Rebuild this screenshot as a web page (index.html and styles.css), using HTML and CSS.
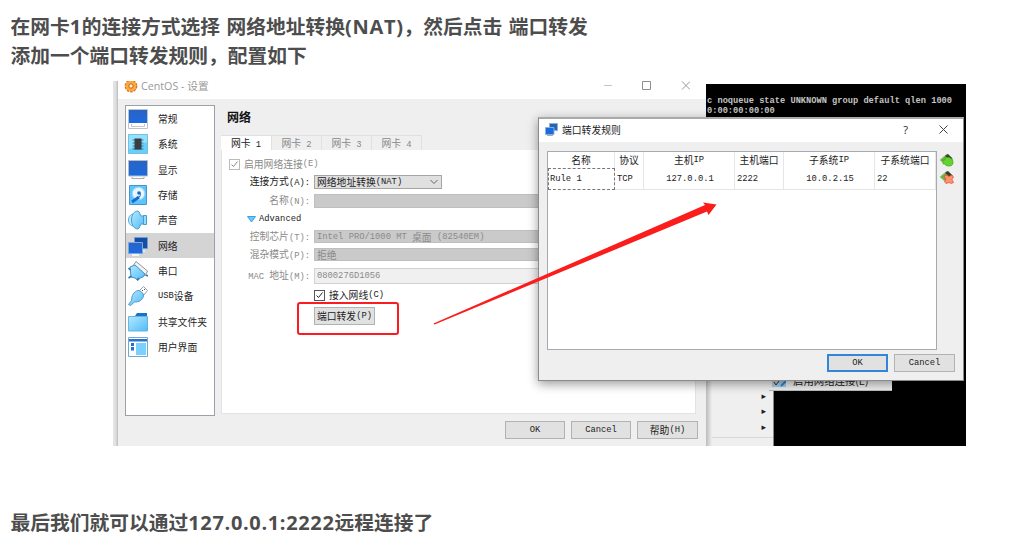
FILE: index.html
```html
<!DOCTYPE html>
<html lang="zh-CN">
<head>
<meta charset="utf-8">
<title>CentOS - 设置</title>
<link rel="stylesheet" href="styles.css">
</head>
<body>
<svg width="0" height="0" class="defs" aria-hidden="true">
  <defs>
    <linearGradient id="blue" x1="0" y1="0" x2="0" y2="1"><stop offset="0" stop-color="#2a63c4"/><stop offset="1" stop-color="#1a6be0"/></linearGradient>
    <linearGradient id="sky" x1="0" y1="0" x2="1" y2="1"><stop offset="0" stop-color="#b5e8ff"/><stop offset="1" stop-color="#4fbcf8"/></linearGradient>
  </defs>
</svg>
<main class="article">
  <p class="lead">在网卡<span>1</span>的连接方式选择 网络地址转换<span>(NAT)</span>，然后点击 端口转发<br>添加一个端口转发规则，配置如下</p>

  <figure class="desktop">
    <div class="console">
      <div>c noqueue state UNKNOWN group default qlen 1000</div>
      <div>0:00:00:00:00</div>
    </div>
    <div class="menu">
      <i>▸</i><i>▸</i><i>▸</i>
    </div>
    <div class="statusbar"><span class="mark"><svg width="14" height="10"><path d="M0 0h14v6H0z" fill="#9fd0f2"/><path d="M1 0h6v4H1z" fill="#c8c8c8"/><path d="M2 1l2 3 3-4" fill="none" stroke="#333"/><path d="M9 5l5-5" stroke="#2a8ad8" stroke-width="2"/></svg></span><span class="cut">启用网络连接(E)</span></div>

    <section class="window settings">
      <header class="titlebar">
        <svg width="14" height="14" viewBox="0 0 14 14"><circle cx="7" cy="7" r="5.6" fill="#f49a2c" stroke="#d9741d" stroke-width="1.6" stroke-dasharray="2.4 1.1"/><circle cx="7" cy="7" r="5.2" fill="#fbab3e"/><circle cx="7" cy="7" r="2.2" fill="#fff1c8" stroke="#cf5b1c"/></svg>
        <span class="name">CentOS - 设置</span>
        <span class="controls">
          <svg width="90" height="12"><path d="M4 5.500h8" stroke="#c4c4c4"/><path d="M42.500 1.500h8v8h-8z" fill="none" stroke="#8e8e8e"/><path d="M82 1.500l8 8M90 1.500l-8 8" stroke="#999"/></svg>
        </span>
      </header>
      <div class="body">
        <nav class="side">
          <div class="item"><svg viewBox="0 0 20 20"><path d="M.5.500h19v19H.5z" fill="#fff" stroke="#bcc3cb"/><path d="M1 1h18v13H1z" fill="url(#blue)"/><path d="M3.500 15v2.500h13V15" fill="none" stroke="#c5c9ce"/></svg>常规</div>
          <div class="item"><svg viewBox="0 0 20 20"><path d="M.5.500h19v19H.5z" fill="#67cffb" stroke="#79bddf"/><path d="M1 1h18v7L1 15z" fill="#92e1ff"/><path d="M4.500 6h11M4.500 9h11M4.500 12h11M4.500 15h11" stroke="#357fa6"/><path d="M6.500 4.500h7v11h-7z" fill="#383d43"/></svg>系统</div>
          <div class="item"><svg viewBox="0 0 20 20"><path d="M.5.500h19v15.500H.5z" fill="url(#blue)" stroke="#b6bdc8"/><path d="M4 17v1.500h12V17" fill="#fff" stroke="#a4a9b0"/></svg>显示</div>
          <div class="item"><svg viewBox="0 0 20 20"><path d="M1.500.500h17v19h-17z" fill="#5cc5ff" stroke="#4896c9"/><circle cx="10.500" cy="8.500" r="6.300" fill="#e7f7ff" stroke="#9bd3f2"/><path d="M4 17l7-5" stroke="#186bcc" stroke-width="3" fill="none"/><path d="M10 13c2-1 3-3 2-5" stroke="#186bcc" fill="none"/><circle cx="11" cy="8" r="1.800" fill="#1666cc"/></svg>存储</div>
          <div class="item"><svg viewBox="0 0 20 20"><path d="M6 4C2 4 .5 7 .5 10S2 16 6 16z" fill="#b9ebff" stroke="#58aede"/><path d="M10 1C6 1 3.500 5 3.500 10S6 19 10 19c2-1 2-4 3-5h3V6h-3c-1-1-1-4-3-5z" fill="url(#sky)" stroke="#4c9bcb"/><path d="M15.500 5.500h3v9h-3z" fill="#8de0ff" stroke="#4c9bcb"/></svg>声音</div>
          <div class="item active"><svg viewBox="0 0 20 20"><path d="M6.500 1.500h13v11h-13z" fill="#174da1" stroke="#6d9ddd"/><path d="M11 15h6" stroke="#fff"/><path d="M.5 6.500h14v11H.5z" fill="url(#blue)" stroke="#79a9e6"/><path d="M4 19h7" stroke="#fff" stroke-width="1.500"/></svg>网络</div>
          <div class="item"><svg viewBox="0 0 20 20"><path d="M5 5l3-4.500L19.500 10 17 15z" fill="#f1f3f4" stroke="#8c969d"/><path d="M2 6l5-2 10 9-2 3-3 1-2 2.500L7 17l-4-1z" fill="url(#sky)" stroke="#3f91c6"/><path d="M.5 7l2 2M.5 17l3-2M9 19l2-2M18 14l2 1" stroke="#2d78b3" stroke-width="1.600"/></svg>串口</div>
          <div class="item"><svg viewBox="0 0 20 20"><path d="M11.500 4.500l4-4 4 4-4 5z" fill="#fff" stroke="#969fa5"/><path d="M14 4l1 1M16 3l1 1" stroke="#555"/><path d="M10 4.500c2-.5 6 3 5.500 5.500-1 4-4 6-9 6l-4 3.500-2-1 3-4c0-5 2.500-9 6.500-10z" fill="url(#sky)" stroke="#519cc7"/></svg><b>USB</b>设备</div>
          <div class="item"><svg viewBox="0 0 20 20"><path d="M7 4l2-3h10v4H7z" fill="#1b70c8"/><path d="M.5 4.500h19v14.500H.5z" fill="url(#sky)" stroke="#64b5df"/></svg>共享文件夹</div>
          <div class="item"><svg viewBox="0 0 20 20"><path d="M.5.500h19v19H.5z" fill="#fff" stroke="#6ea9d2"/><path d="M1 2h18v2.500H1z" fill="#2a70cf"/><path d="M8 6h10v12H8z" fill="#7ad0ff"/><path d="M3 6h3v3H3zm0 4h3v3.500H3z" fill="#236ed5"/></svg>用户界面</div>
        </nav>
        <div class="content">
          <h2>网络</h2>
          <div class="tabs"><span class="on">网卡<b> 1</b></span><span>网卡<b> 2</b></span><span>网卡<b> 3</b></span><span>网卡<b> 4</b></span></div>
          <div class="panel">
            <div class="line dim enable"><i class="check"><svg viewBox="0 0 9 9"><path d="M1.500 4.500l2 2 4-5" fill="none" stroke="currentColor"/></svg></i>启用网络连接<b>(E)</b></div>
            <div class="line mode"><label>连接方式<b>(A):</b></label><span class="select">网络地址转换<b>(NAT)</b><svg width="8" height="6"><path d="M.5 1l3.500 3.500L7.500 1" fill="none" stroke="#666"/></svg></span></div>
            <div class="line dim named"><label>名称<b>(N):</b></label><span class="field"></span></div>
            <div class="line advanced"><svg width="9" height="7"><path d="M.5.500h8l-4 5.500z" fill="#6fc9fb" stroke="#3aa0e8"/></svg><b>Advanced</b></div>
            <div class="line dim chip"><label>控制芯片<b>(T):</b></label><span class="field"><b>Intel PRO/1000 MT </b>桌面<b> (82540EM)</b></span></div>
            <div class="line dim mix"><label>混杂模式<b>(P):</b></label><span class="field">拒绝</span></div>
            <div class="line dim mac"><label><b>MAC </b>地址<b>(M):</b></label><span class="field light"><b>0800276D1056</b></span></div>
            <div class="line cable"><label></label><i class="check"><svg viewBox="0 0 9 9"><path d="M1.500 4.500l2 2 4-5" fill="none" stroke="currentColor"/></svg></i>接入网线<b>(C)</b></div>
            <div class="line forward"><label></label><span class="button small">端口转发<b>(P)</b></span></div>
          </div>
        </div>
      </div>
      <footer class="actions"><span class="button"><b>OK</b></span><span class="button"><b>Cancel</b></span><span class="button">帮助<b>(H)</b></span></footer>
    </section>

    <section class="window dialog">
      <header class="titlebar">
        <svg width="13" height="13" viewBox="0 0 13 13"><path d="M4.500.500h8v7h-8z" fill="#2862b5" stroke="#86b2df"/><path d="M.5 4.500h8.500v7H.5z" fill="#1a6bdd" stroke="#86b2df"/><path d="M2 12.500h6" stroke="#aaa"/></svg>
        <span class="name">端口转发规则</span>
        <span class="help">?</span>
        <svg width="9" height="9"><path d="M.5.500l8 8M8.500.500l-8 8" stroke="#444"/></svg>
      </header>
      <div class="rules">
        <div class="table">
          <div class="row head"><span>名称</span><span>协议</span><span>主机<b>IP</b></span><span>主机端口</span><span>子系统<b>IP</b></span><span>子系统端口</span></div>
          <div class="row"><span class="focus"><b>Rule 1</b></span><span><b>TCP</b></span><span class="mid"><b>127.0.0.1</b></span><span><b>2222</b></span><span class="mid"><b>10.0.2.15</b></span><span><b>22</b></span></div>
        </div>
        <div class="tools">
          <svg width="14" height="14" viewBox="0 0 14 14"><path d="M0 7l7-6 6 5-6 7z" fill="#62b43b" stroke="#a3bf8d"/><path d="M5 3l3-2 4 4-2 2z" fill="#35452f"/><path d="M5 4.500h4.500L13 7.500v3.500l-2 2H7l-2-2H3V7h2z" fill="#65d32e" stroke="#43a51c" stroke-width=".6"/></svg>
          <svg width="14" height="14" viewBox="0 0 14 14"><path d="M0 7l7-6 6 5-6 7z" fill="#65b541" stroke="#a3bf8d"/><path d="M5 3l3-2 4 4-2 2z" fill="#3b3c2c"/><path d="M4 6l2-1 3 1.500L12 5l1.500 2-1.500 2.500 1.500 3-2 1-2.500-1-3 1-1.500-2L6 9z" fill="#ff9070" stroke="#e0492e" stroke-width=".7"/></svg>
        </div>
      </div>
      <footer class="actions"><span class="button primary"><b>OK</b></span><span class="button"><b>Cancel</b></span></footer>
    </section>

    <div class="highlight"></div>
    <svg class="arrow" width="853" height="365"><path d="M320.500 242.500L592 124 590 121.500 603.500 123.500 595.500 134 594 130.500 321.500 243.500z" fill="#fb1c1c"/></svg>
  </figure>

  <p class="tail">最后我们就可以通过<span>127.0.0.1:2222</span>远程连接了</p>
</main>
</body>
</html>
```

FILE: styles.css
```css
* { box-sizing: border-box; }
body { margin: 0; background: #fff; }
.defs { position: absolute; }
.article { width: 1029px; height: 546px; overflow: hidden; padding: 11px 0 0 10.500px; }
.lead, .tail { margin: 0; font: bold 19.75px/29px "Noto Sans CJK SC", sans-serif; color: #4d4d4d; white-space: nowrap; word-spacing: 2px; }
.lead span, .tail span { font: bold 20px/20px "Open Sans", "Noto Sans CJK SC", sans-serif; letter-spacing: .65px; }
.tail { margin-top: 61px; }

.desktop {
  position: relative; width: 853px; height: 365px; margin: 12px 0 0 102.500px; overflow: hidden;
  background: linear-gradient(90deg, #e6e6e6, #dedede 3px, #b9b9b9 5px, #fff 5px);
  font: 9.8px/12px "Noto Sans CJK SC", sans-serif; color: #222; white-space: nowrap;
}
.desktop b { font: 8.8px/12px "Liberation Mono", monospace; white-space: pre; }
.desktop i { font-style: normal; }

/* free-floating layers of the desktop */
.console { position: absolute; left: 593px; top: 3px; width: 260px; height: 362px; padding: 12px 0 0 1px; background: #000; color: #c3c3c3; font: bold 8.7px/10px "Liberation Mono", monospace; }
.menu { position: absolute; left: 593px; top: 300px; width: 68px; height: 65px; padding: 8px 7px 0 0; background: linear-gradient(90deg, #bbb, #efefef 6px); border-right: 1px solid #888; display: flex; flex-direction: column; align-items: flex-end; }
.menu::after { content: ""; width: 61px; margin: 2px -7px 0 0; border-top: 1px solid #d8d8d8; }
.menu i { font: 9px/15.4px "DejaVu Sans", sans-serif; }
.statusbar { position: absolute; left: 656px; top: 296px; width: 123px; height: 14px; padding: 4px 0 0 3px; background: #eee; border-bottom: 1px solid #bbb; display: flex; gap: 7px; overflow: hidden; }
.cut { margin-top: -6px; font-size: 10.400px; }
.window { position: absolute; display: flex; flex-direction: column; background: #efefef; }
.settings { left: 5px; top: 0; width: 588px; height: 365px; }
.dialog { left: 425px; top: 36px; width: 426px; height: 264px; border: 1px solid #8b8b8b; border-top: 2px solid #aaa; box-shadow: 0 3px 10px rgba(0,0,0,.4); }
.highlight { position: absolute; left: 184px; top: 221px; width: 102px; height: 33px; border: 2px solid #fb1c22; border-radius: 3px; }
.arrow { position: absolute; left: 0; top: 0; }

.titlebar { display: flex; align-items: center; background: #fff; }
.settings .titlebar { height: 18px; padding: 0 0 8px 6px; color: #999; }
.settings .titlebar > svg { flex: none; }
.settings .name { margin-left: 3px; font: 10.700px/12px "Open Sans", "Noto Sans CJK SC", sans-serif; }
.controls { margin-left: auto; margin-right: 16px; height: 12px; }
.body { display: flex; padding: 6px 10px 0 7px; }
.side { width: 90px; height: 311px; padding-top: .5px; background: #fff; border: 1px solid #9ba1a8; }
.item { height: 25.300px; padding-left: 2px; display: flex; align-items: center; }
.item svg { width: 20px; height: 20px; margin-right: 10px; flex: none; }
.active { background: #d4d4d4; }
.content { flex: 1; margin-left: 6px; display: flex; flex-direction: column; }
h2 { margin: 5px 0 11px 6px; font: bold 12px/14px "Noto Sans CJK SC", sans-serif; color: #111; }
.tabs { display: flex; height: 15px; color: #888; }
.tabs span { width: 50px; border: 1px solid #e0e0e0; border-width: 1px 1px 0 0; line-height: 14px; text-align: center; }
.tabs .on { width: 51px; background: #fff; color: #222; }
.panel { height: 264px; background: #fff; border: 1px solid #e3e3e3; border-top: 0; padding: 7px 0 0; }
.line { display: flex; align-items: center; }
.line label { width: 88px; margin-right: 4px; text-align: right; flex: none; }
.dim { color: #8a8a8a; }
.check { width: 11px; height: 11px; border: 1px solid #555; display: flex; margin-right: 4px; }
.dim .check { border-color: #bbb; }
.enable { height: 14px; padding-left: 7px; }
.mode { height: 15px; margin-top: 3px; }
.named { height: 14px; margin-top: 5px; }
.advanced { height: 14px; margin-top: 4px; padding-left: 25px; gap: 3px; }
.chip { height: 13px; margin-top: 4px; }
.mix { height: 13px; margin-top: 5px; }
.mac { height: 16px; margin-top: 7px; }
.cable { height: 14px; margin-top: 4px; }
.forward { height: 18px; margin-top: 5px; }
.select { width: 128px; height: 14px; border: 1px solid #a5a5a5; background: #e0e0e0; display: flex; align-items: center; padding: 0 3px 0 2px; }
.select svg { margin-left: auto; }
.field { flex: 1; align-self: stretch; border: 1px solid #bfbfbf; background: #cacaca; padding-left: 2px; line-height: 12px; display: flex; align-items: center; white-space: pre; }
.light { background: #f0f0f0; border-color: #d2d2d2; }
.actions { display: flex; justify-content: flex-end; gap: 6px; }
.settings .actions { padding: 5px 8px 0 0; }
.button { width: 61px; height: 18px; border: 1px solid #b2b2b2; background: #e1e1e1; display: flex; align-items: center; justify-content: center; }
.settings .actions .button:not(:last-child) { width: 60px; }
.primary { border: 2px solid #3385d6; }

.dialog .titlebar { height: 23px; padding: 0 15px 2px 6px; }
.dialog .name { margin-left: 4px; }
.help { margin-left: auto; margin-right: 31px; font: 11px/12px "Open Sans", sans-serif; }
.rules { display: flex; padding: 9px 0 0 8px; }
.table { width: 390px; height: 199px; border: 1px solid #a5aab1; background: #fff; }
.row { display: grid; grid-template-columns: 67px 29px 91px 49px 91px 61px; height: 22px; }
.row span { border: 1px solid #e6e6e6; border-width: 0 1px 1px 0; padding-left: 2px; line-height: 20px; display: flex; align-items: center; }
.row .mid { justify-content: center; }
.row .focus { border: 1px dashed #777; padding-left: 1px; }
.row.head { height: 16px; }
.row.head span { border-bottom: 0; justify-content: center; padding: 0; line-height: 15px; }
.tools { display: flex; flex-direction: column; gap: 3px; padding: 2px 0 0 3px; }
.dialog .actions { padding: 4px 8px 0 0; }
```
